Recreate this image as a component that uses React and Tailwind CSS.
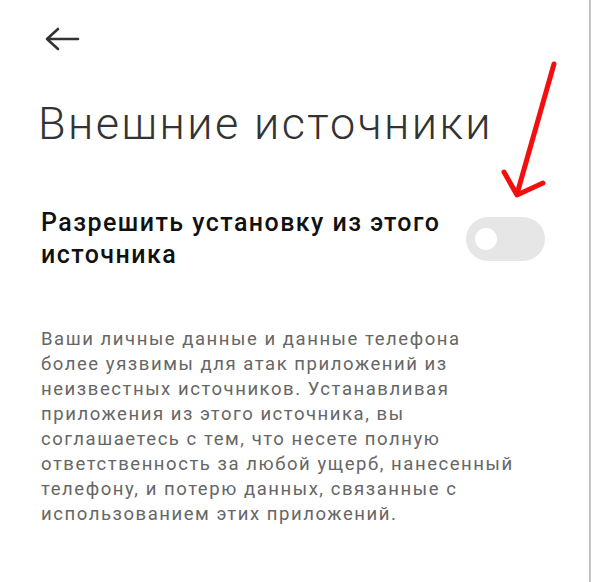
import React from "react";

function BackArrow() {
  return (
    <svg width="36" height="26" viewBox="0 0 36 26" fill="none" className="block">
      <path
        d="M14 3 L3 13 L14 23 M3 13 H34"
        stroke="#333"
        strokeWidth="2.6"
        strokeLinecap="round"
        strokeLinejoin="round"
      />
    </svg>
  );
}

function Toggle() {
  return (
    <div className="flex h-[44px] w-[79px] shrink-0 items-center rounded-full bg-[#e6e6e6] pl-[9px]">
      <div className="h-[22px] w-[22px] rounded-full bg-white" />
    </div>
  );
}

export default function App() {
  return (
    <div
      className="relative h-[582px] w-[591px] overflow-hidden border-r-2 border-[#c2c2c2] bg-white"
      style={{ fontFamily: "Roboto, 'Noto Sans', sans-serif" }}
    >
      <div className="flex flex-col pl-[41px] pr-[44px]">
        <div className="pt-[26px] pl-[3px]">
          <BackArrow />
        </div>

        <h1 className="mt-[46px] ml-[-3px] whitespace-nowrap text-[45px] font-light leading-[52px] tracking-[2.4px] text-[#333]">
          Внешние источники
        </h1>

        <div className="mt-[57px] flex items-center justify-between">
          <div className="whitespace-nowrap text-[25px] font-medium leading-[32px] tracking-[1.45px] text-[#111]">
            Разрешить установку из этого
            <br />
            источника
          </div>
          <Toggle />
        </div>

        <p className="mt-[56px] whitespace-nowrap text-[18.5px] leading-[25px] tracking-[1.55px] text-[#666]">
          Ваши личные данные и данные телефона
          <br />
          более уязвимы для атак приложений из
          <br />
          неизвестных источников. Устанавливая
          <br />
          приложения из этого источника, вы
          <br />
          соглашаетесь с тем, что несете полную
          <br />
          ответственность за любой ущерб, нанесенный
          <br />
          телефону, и потерю данных, связанные с
          <br />
          использованием этих приложений.
        </p>
      </div>

      {/* hand-drawn red pointer over the switch */}
      <svg
        className="pointer-events-none absolute left-0 top-0"
        width="591"
        height="582"
        viewBox="0 0 591 582"
        fill="none"
      >
        <path
          d="M554 64 L517 194 M504 172 L517 195 L543 183"
          stroke="#f40f0f"
          strokeWidth="5"
          strokeLinecap="round"
          strokeLinejoin="round"
        />
      </svg>
    </div>
  );
}
